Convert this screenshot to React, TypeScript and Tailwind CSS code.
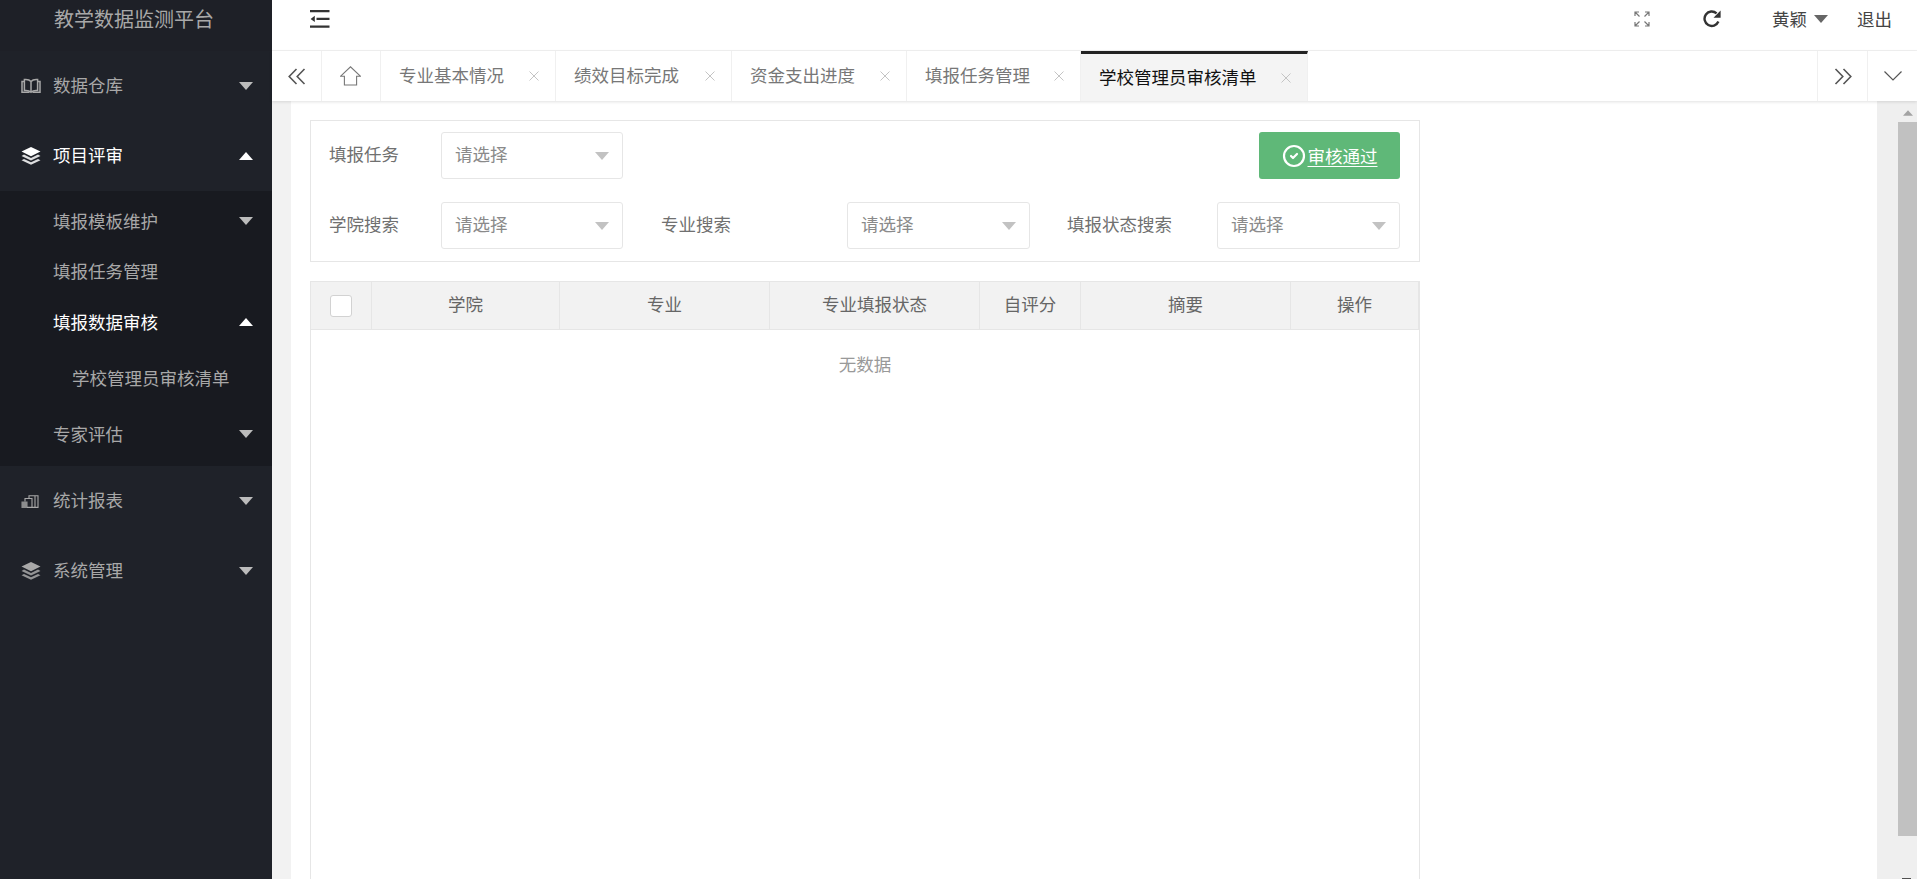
import { CircleCheck } from 'lucide-react';

const font = { fontFamily: '"Noto Sans CJK SC", "Liberation Sans", sans-serif' };

const Caret = ({ up = false, className = '' }: { up?: boolean; className?: string }) => (
  <svg width="14" height="8" viewBox="0 0 14 8" className={className} fill="currentColor">
    <path d={up ? 'M7 0 14 8H0Z' : 'M0 0H14L7 8Z'} />
  </svg>
);

const BookIcon = () => (
  <svg width="20" height="16" viewBox="0 0 20 16" fill="none" stroke="currentColor" strokeWidth="1.5">
    <path d="M10 3.5C8.5 1.7 6 1.2 3.4 1.5V12.5C6 12.2 8.5 12.7 10 14.2 11.5 12.7 14 12.2 16.6 12.5V1.5C14 1.2 11.5 1.7 10 3.5ZM10 3.5V14" />
    <path d="M3.4 3.5H1V14.3H8.5M16.6 3.5H19V14.3H11.5" />
  </svg>
);

const LayersIcon = () => (
  <svg width="20" height="18" viewBox="0 0 20 18" fill="currentColor">
    <path d="M10 0 19.5 4.6 10 9.2.5 4.6Z" />
    <path d="M3 7.6 10 11 17 7.6 19.5 8.9 10 13.5.5 8.9Z" opacity=".85" />
    <path d="M3 11.9 10 15.3 17 11.9 19.5 13.2 10 17.8.5 13.2Z" opacity=".85" />
  </svg>
);

const ChartIcon = () => (
  <svg width="18" height="13" viewBox="0 0 18 13" fill="none" stroke="currentColor" strokeWidth="1.1">
    <path d="M1 7H6V12.4H1Z" fill="currentColor" opacity=".8" />
    <path d="M4 6.5V3.5H11V12.4H6" />
    <path d="M8 3V.7H17V12.4H11" />
    <path d="M14 1V12" />
  </svg>
);

const CloseIcon = () => (
  <svg width="10" height="10" viewBox="0 0 10 10" stroke="#c4c4c4" strokeWidth="1" fill="none" className="shrink-0">
    <path d="M.5.5 9.5 9.5M9.5.5.5 9.5" />
  </svg>
);

const SideItem = ({ icon, label, up = false, active = false }: { icon: React.ReactNode; label: string; up?: boolean; active?: boolean }) => (
  <div className={`flex h-[70px] items-center pl-[21px] pr-[19px] ${active ? 'text-white' : 'text-[#a8a8a8]'}`}>
    <span className="flex w-[32px] shrink-0 items-center">{icon}</span>
    <span className="flex-1 pb-[2px] text-[17.5px]">{label}</span>
    <Caret up={up} className={active ? 'text-white' : 'text-[#bcbcbc]'} />
  </div>
);

const SubItem = ({ label, caret, up = false, active = false, deep = false, cls = '' }: { label: string; caret?: boolean; up?: boolean; active?: boolean; deep?: boolean; cls?: string }) => (
  <div className={`flex h-[50px] items-center pr-[19px] ${deep ? 'pl-[72px]' : 'pl-[53px]'} ${active ? 'text-white' : 'text-[#a8a8a8]'} ${cls}`}>
    <span className="flex-1 text-[17.5px]">{label}</span>
    {caret && <Caret up={up} className={active ? 'text-white' : 'text-[#bcbcbc]'} />}
  </div>
);

const Tab = ({ label, w, active = false }: { label: string; w: string; active?: boolean }) => (
  <div className={`flex h-full shrink-0 items-center justify-between border-r border-[#f0f0f0] pl-[18px] pr-[16px] text-[17.5px] ${w} ${active ? 'border-t-[3px] border-t-[#222] bg-[#f4f4f4] text-[#111]' : 'text-[#777]'}`}>
    <span className={active ? 'pb-px' : 'pb-[2px]'}>{label}</span>
    <CloseIcon />
  </div>
);

const Select = ({ w = 'w-[183px]' }: { w?: string }) => (
  <div className={`flex h-[47px] shrink-0 items-center justify-between rounded-[3px] border border-[#e6e6e6] bg-white pl-[13px] pr-[13px] text-[17.5px] text-[#8a8a8a] ${w}`}>
    <span className="pb-[2px]">请选择</span>
    <Caret className="text-[#c2c2c2]" />
  </div>
);

const Th = ({ w, label, last = false }: { w: string; label: string; last?: boolean }) => (
  <div className={`flex h-full shrink-0 items-center justify-center border-[#e6e6e6] pb-[2px] text-[17.5px] text-[#666] ${w} ${last ? '' : 'border-r'}`}>{label}</div>
);

export default function App() {
  return (
    <div style={font} className="flex h-[879px] w-[1917px] overflow-hidden bg-white">
      <aside className="w-[272px] shrink-0 bg-[#1f2229]">
        <div className="flex h-[51px] items-start bg-[#1e2027] pl-[54px] pt-[4px] text-[20px] leading-[30px] text-[#a8a8a8]">教学数据监测平台</div>
        <SideItem icon={<BookIcon />} label="数据仓库" />
        <SideItem icon={<LayersIcon />} label="项目评审" up active />
        <div className="bg-[#181a20] pb-[7px] pt-[5px]">
          <SubItem label="填报模板维护" caret />
          <SubItem label="填报任务管理" />
          <SubItem label="填报数据审核" caret up active cls="mt-px" />
          <SubItem label="学校管理员审核清单" deep cls="mt-[6px]" />
          <SubItem label="专家评估" caret cls="mt-[6px]" />
        </div>
        <SideItem icon={<ChartIcon />} label="统计报表" />
        <SideItem icon={<LayersIcon />} label="系统管理" />
      </aside>

      <div className="flex min-w-0 flex-1 flex-col">
        <header className="flex h-[51px] shrink-0 items-center border-b border-[#f2f2f2] pb-[12px] pl-[38px] text-[17.5px] text-[#444]">
          <svg width="20" height="18" viewBox="0 0 20 18" fill="#333">
            <path d="M0 0H19.5V2.2H0ZM0 15.6H19.5V17.8H0ZM6.5 7.8H19.5V10H6.5ZM4.8 5.8V12L.6 8.9Z" />
          </svg>
          <div className="ml-auto flex items-center">
            <svg width="16" height="16" viewBox="0 0 16 16" fill="none" stroke="#777" strokeWidth="1.2">
              <path d="M1 5V1H5M1 1 5.5 5.5M11 1H15V5M15 1 10.5 5.5M1 11V15H5M1 15 5.5 10.5M15 11V15H11M15 15 10.5 10.5" />
            </svg>
            <svg width="18" height="18" viewBox="0 0 18 18" fill="none" className="ml-[53px]">
              <path d="M15.4 11.5A7.2 7.2 0 1 1 13.6 3.4" stroke="#333" strokeWidth="2.4" />
              <path d="M17.6.6V7.7H10.5Z" fill="#333" />
            </svg>
            <span className="ml-[51px]">黄颖</span>
            <Caret className="ml-[7px] text-[#666]" />
            <span className="ml-[29px] mr-[25px]">退出</span>
          </div>
        </header>

        <nav className="relative z-10 flex h-[50px] shrink-0 items-stretch bg-white shadow-[0_1px_3px_rgba(0,0,0,0.12)]">
          <div className="flex w-[50px] items-center justify-center border-r border-[#f0f0f0]">
            <svg width="18" height="17" viewBox="0 0 18 17" fill="none" stroke="#555" strokeWidth="1.6">
              <path d="M8.5 1 1.2 8.5 8.5 16M16.5 1 9.2 8.5 16.5 16" />
            </svg>
          </div>
          <div className="flex w-[59px] items-center justify-center border-r border-[#f0f0f0]">
            <svg width="21" height="20" viewBox="0 0 21 20" fill="none" stroke="#777" strokeWidth="1.1" className="mr-[2px]">
              <path d="M.7 10.2 10.5.8 20.3 10.2H16.6V19H4.4V10.2Z" />
            </svg>
          </div>
          <Tab label="专业基本情况" w="w-[175px]" />
          <Tab label="绩效目标完成" w="w-[176px]" />
          <Tab label="资金支出进度" w="w-[175px]" />
          <Tab label="填报任务管理" w="w-[174px]" />
          <Tab label="学校管理员审核清单" w="w-[227px]" active />
          <div className="ml-auto flex w-[50px] items-center justify-center border-l border-[#f0f0f0]">
            <svg width="18" height="17" viewBox="0 0 18 17" fill="none" stroke="#555" strokeWidth="1.6">
              <path d="M1.5 1 8.8 8.5 1.5 16M9.5 1 16.8 8.5 9.5 16" />
            </svg>
          </div>
          <div className="flex w-[50px] items-center justify-center border-l border-[#f0f0f0]">
            <svg width="18" height="10" viewBox="0 0 18 10" fill="none" stroke="#555" strokeWidth="1.2">
              <path d="M.5.5 9 9 17.5.5" />
            </svg>
          </div>
        </nav>

        <div className="flex min-h-0 flex-1">
          <div className="w-[19px] shrink-0 bg-[#f2f2f2]" />
          <main className="flex min-w-0 flex-1 flex-col bg-white pl-[19px] pt-[19px]">
            <section className="h-[142px] w-[1110px] shrink-0 border border-[#e6e6e6] pl-[18px] pr-[19px] pt-[11px] text-[17.5px] text-[#707070]">
              <div className="flex items-center">
                <span className="w-[112px] shrink-0 pb-[2px]">填报任务</span>
                <Select w="w-[182px]" />
                <button className="ml-auto flex h-[47px] w-[141px] items-center justify-center rounded-[3px] bg-[#5fb878] text-white">
                  <CircleCheck size={24} strokeWidth={2.2} />
                  <span className="ml-[2px] mt-[2px] underline underline-offset-[3px]">审核通过</span>
                </button>
              </div>
              <div className="mt-[23px] flex items-center">
                <span className="w-[112px] shrink-0 pb-[2px]">学院搜索</span>
                <Select w="w-[182px]" />
                <span className="ml-[38px] w-[186px] shrink-0 pb-[2px]">专业搜索</span>
                <Select />
                <span className="ml-[37px] w-[150px] shrink-0 pb-[2px]">填报状态搜索</span>
                <Select />
              </div>
            </section>

            <section className="mt-[19px] flex w-[1110px] flex-1 flex-col border-x border-[#e6e6e6]">
              <div className="flex h-[49px] shrink-0 border-y border-[#e6e6e6] bg-[#f2f2f2]">
                <div className="flex h-full w-[61px] shrink-0 items-center justify-center border-r border-[#e6e6e6]">
                  <div className="mr-[1px] h-[22px] w-[22px] rounded-[3px] border border-[#d2d2d2] bg-white" />
                </div>
                <Th w="w-[188px]" label="学院" />
                <Th w="w-[210px]" label="专业" />
                <Th w="w-[210px]" label="专业填报状态" />
                <Th w="w-[101px]" label="自评分" />
                <Th w="w-[210px]" label="摘要" />
                <Th w="w-[128px]" label="操作" />
              </div>
              <div className="pt-[20px] text-center text-[17.5px] leading-[28px] text-[#999]">无数据</div>
            </section>
          </main>

          <div className="flex w-[40px] shrink-0 flex-col items-end bg-[#efefef]">
            <div className="flex h-[21px] w-[19px] items-center justify-center pt-[3px]">
              <Caret up className="h-[6px] w-[10px] text-[#a3a3a3]" />
            </div>
            <div className="h-[714px] w-[19px] bg-[#c1c1c1]" />
            <div className="mr-[6px] mt-auto h-px w-[9px] bg-[#505050]" />
          </div>
        </div>
      </div>
    </div>
  );
}
